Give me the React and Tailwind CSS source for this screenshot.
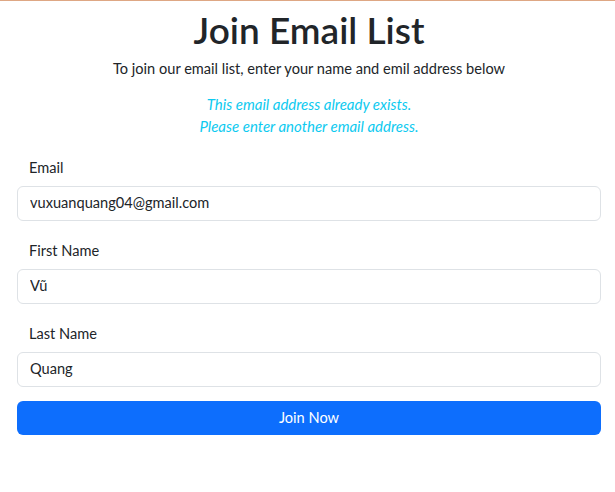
import React from 'react';

const fields = [
    { label: 'Email', value: 'vuxuanquang04@gmail.com' },
    { label: 'First Name', value: 'Vũ' },
    { label: 'Last Name', value: 'Quang' },
];

const App = () => {
    return (
        <div className="min-h-screen bg-white border-t border-[#dea784] font-['Lato',sans-serif] text-[#212529]">
            <div className="pl-[17px] pr-[14px]">
                <h1 className="text-center text-[37px] font-semibold leading-[44px] pt-[7px]">Join Email List</h1>
                <p className="text-center text-[14.6px] leading-[20px] mt-[7px]">
                    To join our email list, enter your name and emil address below
                </p>
                <div className="text-center text-[15px] leading-[21.5px] italic text-[#0dcaf0] mt-[15px]">
                    <p>This email address already exists.</p>
                    <p>Please enter another email address.</p>
                </div>
                <form className="mt-[20px] flex flex-col">
                    {fields.map((f, i) => (
                        <div key={f.label} className={i < fields.length - 1 ? 'mb-[19px]' : 'mb-[14px]'}>
                            <label className="block px-[12px] text-[14.6px] leading-[22px] mb-[7px]">{f.label}</label>
                            <input
                                readOnly
                                value={f.value}
                                className="w-full h-[35px] px-[12px] pb-[3px] text-[14.6px] border border-[#dee2e6] rounded-[6px] outline-none"
                            />
                        </div>
                    ))}
                    <button type="button" className="w-full h-[34px] bg-[#0d6efd] text-white text-[14.6px] rounded-[6px]">
                        Join Now
                    </button>
                </form>
            </div>
        </div>
    );
};

export default App;
